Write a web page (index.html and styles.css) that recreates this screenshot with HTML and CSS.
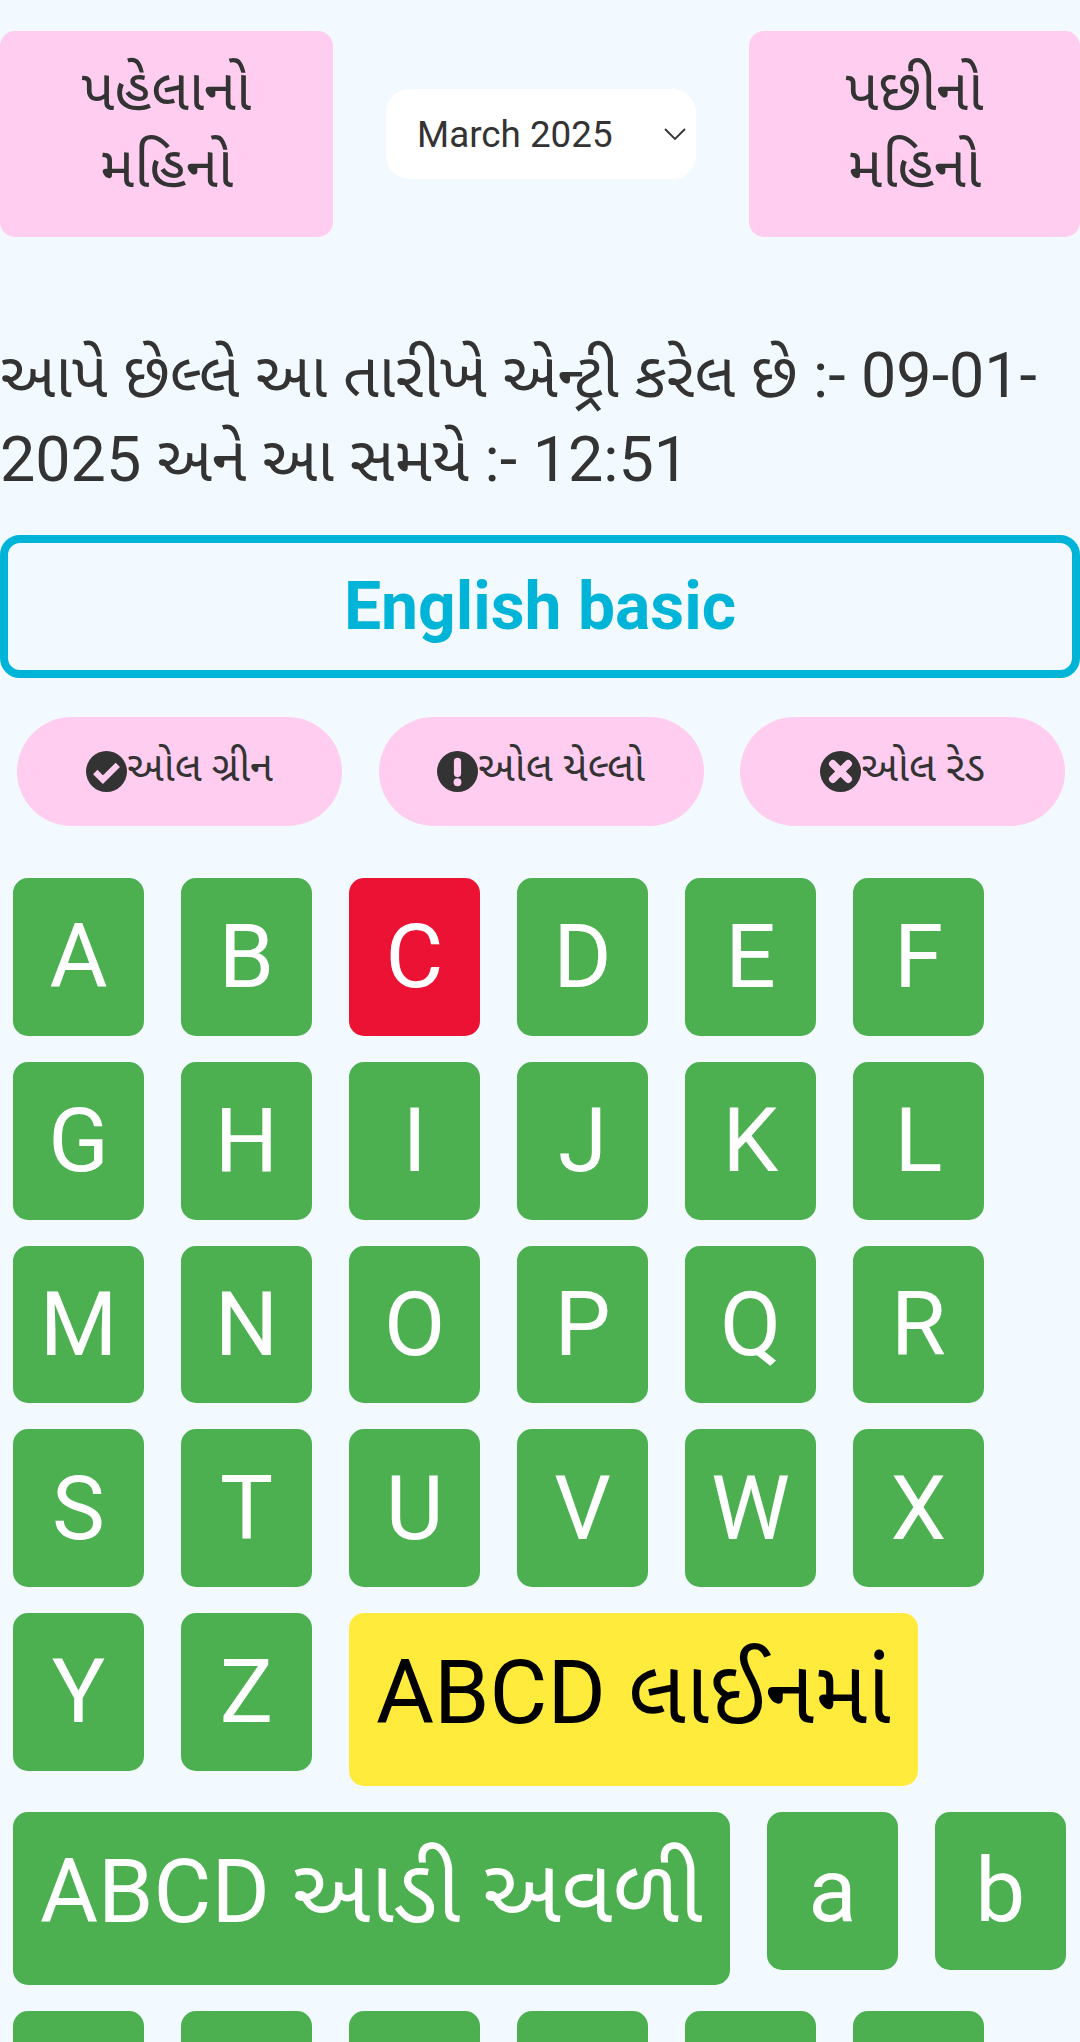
FILE: index.html
```html
<!DOCTYPE html>
<html>
<head>
  <title>English basic</title>
  <link rel="stylesheet" href="styles.css">
</head>
<body>
  <div class="month-bar">
    <button class="month-btn prev">પહેલાનો મહિનો</button>
    <div class="month-select-wrap">
      <select class="month-select">
        <option>March 2025</option>
      </select>
      <svg class="chevron" viewBox="0 0 22 12" width="22" height="12"><path d="M1 1l10 10L21 1" fill="none" stroke="#333" stroke-width="1.8"/></svg>
    </div>
    <button class="month-btn next">પછીનો મહિનો</button>
  </div>

  <p class="last-entry">આપે છેલ્લે આ તારીખે એન્ટ્રી કરેલ છે :- 09-01-2025 અને આ સમયે :- 12:51</p>

  <div class="title-box">English basic</div>

  <div class="all-actions">
    <button class="pill">
      <svg class="pill-icon" viewBox="0 0 40 40"><circle cx="20" cy="20" r="20" fill="#333"/><path d="M9 20.5l7.5 7.5L31 13.5" fill="none" stroke="#fecdef" stroke-width="6"/></svg>
      <span class="pill-text">ઓલ ગ્રીન</span>
    </button>
    <button class="pill">
      <svg class="pill-icon" viewBox="0 0 40 40"><circle cx="20" cy="20" r="20" fill="#333"/><path d="M20 10v12" stroke="#fecdef" stroke-width="7" stroke-linecap="round"/><circle cx="20" cy="30.5" r="3.8" fill="#fecdef"/></svg>
      <span class="pill-text">ઓલ યેલ્લો</span>
    </button>
    <button class="pill">
      <svg class="pill-icon" viewBox="0 0 40 40"><circle cx="20" cy="20" r="20" fill="#333"/><path d="M12.5 12.5l15 15M27.5 12.5l-15 15" stroke="#fecdef" stroke-width="7.4" stroke-linecap="round"/></svg>
      <span class="pill-text">ઓલ રેડ</span>
    </button>
  </div>

  <div class="letters">
    <button class="letter">A</button>
    <button class="letter">B</button>
    <button class="letter red">C</button>
    <button class="letter">D</button>
    <button class="letter">E</button>
    <button class="letter">F</button>
    <button class="letter">G</button>
    <button class="letter">H</button>
    <button class="letter">I</button>
    <button class="letter">J</button>
    <button class="letter">K</button>
    <button class="letter">L</button>
    <button class="letter">M</button>
    <button class="letter">N</button>
    <button class="letter">O</button>
    <button class="letter">P</button>
    <button class="letter">Q</button>
    <button class="letter">R</button>
    <button class="letter">S</button>
    <button class="letter">T</button>
    <button class="letter">U</button>
    <button class="letter">V</button>
    <button class="letter">W</button>
    <button class="letter">X</button>
    <button class="letter">Y</button>
    <button class="letter">Z</button>
    <button class="letter wide yellow">ABCD લાઈનમાં</button>
    <button class="letter wide">ABCD આડી અવળી</button>
    <button class="letter">a</button>
    <button class="letter">b</button>
    <button class="letter">c</button>
    <button class="letter">d</button>
    <button class="letter">e</button>
    <button class="letter">f</button>
    <button class="letter">g</button>
    <button class="letter">h</button>
  </div>
</body>
</html>
```

FILE: styles.css
```css
html {
  height: 100%;
  overflow: hidden;
}

body {
  font-family: Roboto, "Noto Sans Gujarati", "Noto Sans", sans-serif;
  background-color: #f3faff;
  color: #333;
  margin: 0;
  padding: 0;
  height: 100%;
  overflow: hidden;
}

button {
  font-family: inherit;
  border: none;
  cursor: pointer;
}

.month-bar {
  display: flex;
  justify-content: space-between;
  align-items: center;
  padding-top: 31px;
}

.month-btn {
  height: 206px;
  padding: 0 60px 10px;
  font-size: 58px;
  line-height: 77px;
  color: #333;
  background-color: #fecdef;
  border-radius: 15px;
}

.month-btn.prev {
  width: 333px;
}

.month-btn.next {
  width: 331px;
}

.month-select-wrap {
  position: relative;
  width: 310px;
  height: 90px;
}

.month-select {
  appearance: none;
  width: 100%;
  height: 100%;
  padding: 0 0 0 31px;
  font-family: inherit;
  font-size: 36.8px;
  color: #333;
  background-color: #fff;
  border: none;
  border-radius: 24px;
}

.chevron {
  position: absolute;
  right: 10px;
  top: 39px;
}

.last-entry {
  margin: 97px 0 0;
  font-size: 62.8px;
  line-height: 84px;
}

.title-box {
  margin-top: 33px;
  height: 143px;
  box-sizing: border-box;
  border: 8px solid #00b4d8;
  border-radius: 20px;
  display: flex;
  justify-content: center;
  align-items: center;
  font-size: 66px;
  font-weight: bold;
  color: #00b4d8;
}

.all-actions {
  display: flex;
  justify-content: space-between;
  padding: 39px 15px 0 17px;
}

.pill {
  width: 325px;
  height: 109px;
  display: flex;
  justify-content: center;
  align-items: center;
  font-size: 41.6px;
  color: #333;
  background-color: #fecdef;
  border-radius: 55px;
}

.pill-icon {
  width: 41px;
  height: 41px;
  flex: none;
}

.pill-text {
  margin-bottom: 3px;
}

.letters {
  display: flex;
  flex-wrap: wrap;
  align-items: flex-start;
  gap: 26px 37px;
  padding: 52px 0 0 13px;
}

.letter {
  width: 131px;
  min-height: 157.75px;
  padding: 0;
  font-size: 89px;
  color: #fff;
  background-color: #4caf50;
  border-radius: 15px;
}

.letter.red {
  background-color: #ec1233;
}

.letter.wide {
  width: auto;
  min-height: 173px;
  padding: 0 27px;
}

.letter.yellow {
  color: #000;
  background-color: #ffeb3b;
}
```
